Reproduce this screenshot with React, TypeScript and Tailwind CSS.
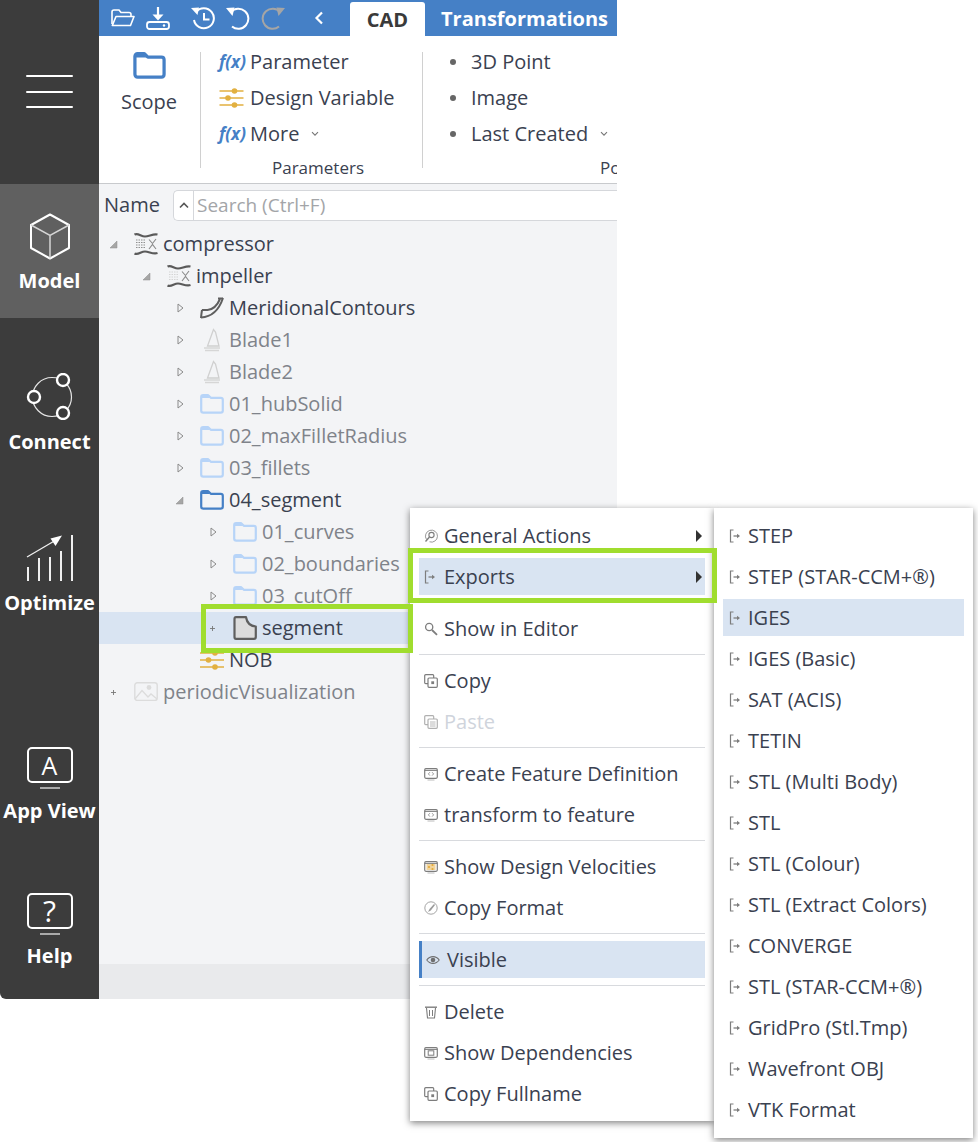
import React from "react";

const FONT = "font-['Open_Sans',_'Liberation_Sans',_sans-serif]";

function FolderIcon({ color, w = 24, h = 20, sw = 2.2 }: { color: string; w?: number; h?: number; sw?: number }) {
  return (
    <svg width={w} height={h} viewBox="0 0 24 20" fill="none" className="shrink-0">
      <path
        d="M1.2 16.5V3.2C1.2 2 2 1.2 3.2 1.2H8.2L10.8 3.8H20.8C22 3.8 22.8 4.6 22.8 5.8V16.5C22.8 17.8 22 18.6 20.8 18.6H3.2C2 18.6 1.2 17.8 1.2 16.5Z"
        stroke={color}
        strokeWidth={sw}
        strokeLinejoin="round"
      />
      <path d="M2 2H8L10 4H2Z" fill={color} />
    </svg>
  );
}

function Sliders({ w = 24, h = 20 }: { w?: number; h?: number }) {
  return (
    <svg width={w} height={h} viewBox="0 0 24 20" className="shrink-0">
      <g stroke="#e2b040" strokeWidth="1.5">
        <path d="M0 3H24M0 10H24M0 17H24" />
      </g>
      <g fill="#e2b040">
        <circle cx="15" cy="3" r="2.8" />
        <circle cx="8.5" cy="10" r="2.8" />
        <circle cx="15" cy="17" r="2.8" />
      </g>
    </svg>
  );
}

function Compressor({ dark }: { dark?: boolean }) {
  const dots = dark ? "#8f8f8f" : "#d4d4d4";
  return (
    <svg width="24" height="24" viewBox="0 0 24 24" fill="none" className="shrink-0">
      <path d="M0.5 2.5C4 0.5 7 4.5 11 4.5S19 1.5 23.5 2.5" stroke="#5a5a5a" strokeWidth="2.2" />
      <path d="M0.5 21.5C4 23.5 7 19.5 11 19.5S19 22.5 23.5 21" stroke="#5a5a5a" strokeWidth="2.2" />
      <g stroke={dots} strokeWidth="1.1" strokeDasharray="1.5 1">
        <path d="M2 8H12M2 10.5H11M2 13H11M2 15.5H12" />
      </g>
      <path d="M15 7.5L18.5 11.5L22 7M15 17L18.5 12.5L22 17" stroke="#8a8a8a" strokeWidth="1.1" />
    </svg>
  );
}

function Meridional() {
  return (
    <svg width="24" height="22" viewBox="0 0 24 22" fill="none" className="shrink-0">
      <path d="M2 13H7.5C13 12.5 17 9 20 2" stroke="#5f5f5f" strokeWidth="2" />
      <path d="M2 13C1.5 16 1.3 18 1 21" stroke="#5f5f5f" strokeWidth="2" />
      <path d="M1 20.5C11 20 19 13 23 1" stroke="#5f5f5f" strokeWidth="2" />
      <path d="M18 1.5H23" stroke="#5f5f5f" strokeWidth="2" />
    </svg>
  );
}

function Blade() {
  return (
    <svg width="24" height="24" viewBox="0 0 24 24" fill="none" className="shrink-0">
      <path d="M13.5 1.5L7.5 18H19L15.5 4Z" stroke="#d0d0d0" strokeWidth="1.3" />
      <path d="M4 20H20M5 22.5H19" stroke="#d6d6d6" strokeWidth="1.4" />
    </svg>
  );
}

function SegmentIcon() {
  return (
    <svg width="24" height="24" viewBox="0 0 24 24" className="shrink-0">
      <path
        d="M1.5 3C1.5 2 2 1.2 3 1.2H13C14 7 17 10 22.8 10.5V21C22.8 22 22 22.8 21 22.8H3C2 22.8 1.5 22 1.5 21Z"
        fill="#dcdcdc"
        stroke="#5f5f5f"
        strokeWidth="2.2"
        strokeLinejoin="round"
      />
    </svg>
  );
}

function PictureIcon() {
  return (
    <svg width="24" height="20" viewBox="0 0 24 20" fill="none" className="shrink-0">
      <rect x="0.8" y="0.8" width="22.4" height="17.6" rx="2.5" stroke="#dcdcdc" strokeWidth="1.4" />
      <circle cx="15" cy="5.5" r="2.4" fill="#dcdcdc" />
      <path d="M1 17L8 8.5L14 15L17 12L23 17" stroke="#dcdcdc" strokeWidth="1.3" />
    </svg>
  );
}

type Marker = "open" | "closed" | "plus";

function Arrow({ kind }: { kind: Marker }) {
  if (kind === "open")
    return (
      <svg width="9" height="9" viewBox="0 0 9 9" className="shrink-0">
        <path d="M8 1V8H1Z" fill="#a6a6a6" stroke="#8c8c8c" strokeWidth="0.5" />
      </svg>
    );
  if (kind === "closed")
    return (
      <svg width="9" height="10" viewBox="0 0 9 10" fill="none" className="shrink-0">
        <path d="M3 1V9L8 5Z" stroke="#8a8a8a" strokeWidth="1" />
      </svg>
    );
  return (
    <svg width="9" height="9" viewBox="0 0 9 9" className="shrink-0">
      <path d="M2 4.5H7M4.5 2V7" stroke="#777" strokeWidth="0.9" />
    </svg>
  );
}

type TreeItem = {
  label: string;
  level: number;
  marker?: Marker;
  icon: React.ReactNode;
  dim?: boolean;
  selected?: boolean;
};

const LIGHT = "#b7d4f8";
const tree: TreeItem[] = [
  { label: "compressor", level: 0, marker: "open", icon: <Compressor dark /> },
  { label: "impeller", level: 1, marker: "open", icon: <Compressor /> },
  { label: "MeridionalContours", level: 2, marker: "closed", icon: <Meridional /> },
  { label: "Blade1", level: 2, marker: "closed", icon: <Blade />, dim: true },
  { label: "Blade2", level: 2, marker: "closed", icon: <Blade />, dim: true },
  { label: "01_hubSolid", level: 2, marker: "closed", icon: <FolderIcon color={LIGHT} />, dim: true },
  { label: "02_maxFilletRadius", level: 2, marker: "closed", icon: <FolderIcon color={LIGHT} />, dim: true },
  { label: "03_fillets", level: 2, marker: "closed", icon: <FolderIcon color={LIGHT} />, dim: true },
  { label: "04_segment", level: 2, marker: "open", icon: <FolderIcon color="#4580c6" /> },
  { label: "01_curves", level: 3, marker: "closed", icon: <FolderIcon color={LIGHT} />, dim: true },
  { label: "02_boundaries", level: 3, marker: "closed", icon: <FolderIcon color={LIGHT} />, dim: true },
  { label: "03_cutOff", level: 3, marker: "closed", icon: <FolderIcon color={LIGHT} />, dim: true },
  { label: "segment", level: 3, marker: "plus", icon: <SegmentIcon />, selected: true },
  { label: "NOB", level: 2, icon: <Sliders /> },
  { label: "periodicVisualization", level: 0, marker: "plus", icon: <PictureIcon />, dim: true },
];

const pad: Record<number, string> = {
  0: "pl-[10px]",
  1: "pl-[43px]",
  2: "pl-[76px]",
  3: "pl-[109px]",
};

function TreeRow({ item }: { item: TreeItem }) {
  return (
    <div className={`flex h-8 items-center ${pad[item.level]} ${item.selected ? "bg-[#d9e4f2]" : ""}`}>
      <span className="flex w-[25px] shrink-0 items-center">{item.marker && <Arrow kind={item.marker} />}</span>
      <span className="flex w-[29px] shrink-0 items-center">{item.icon}</span>
      <span className={`text-[20px] leading-8 whitespace-nowrap ${item.dim ? "text-[#7f838a]" : "text-[#3a4150]"}`}>
        {item.label}
      </span>
    </div>
  );
}

function ExportIcon() {
  return (
    <svg width="12" height="14" viewBox="0 0 12 14" fill="none" className="shrink-0">
      <path d="M4.5 1H1.5V13H4.5" stroke="#7d7d7d" strokeWidth="1.2" />
      <path d="M4.5 7H9" stroke="#7d7d7d" strokeWidth="1.3" />
      <path d="M8 4.8L11 7L8 9.2Z" fill="#7d7d7d" />
    </svg>
  );
}

function CopyIcon({ paste }: { paste?: boolean }) {
  return (
    <svg width="14" height="14" viewBox="0 0 14 14" fill="none" className="shrink-0">
      <rect x="0.7" y="0.7" width="9" height="9" rx="1" stroke="#7d7d7d" strokeWidth="1.2" />
      <rect x="4" y="4" width="9.3" height="9.3" rx="1" fill="#fff" stroke="#7d7d7d" strokeWidth="1.2" />
      {paste ? (
        <path d="M6 7H11.5M6 9H11.5M6 11H11.5" stroke="#7d7d7d" strokeWidth="0.9" />
      ) : (
        <rect x="7.3" y="7.3" width="2.8" height="2.8" fill="#7d7d7d" />
      )}
    </svg>
  );
}

function ScreenIcon({ kind }: { kind: "code" | "sliders" | "square" }) {
  return (
    <svg width="14" height="14" viewBox="0 0 14 14" fill="none" className="shrink-0">
      <rect x="0.7" y="1.7" width="12.6" height="9.6" rx="1.2" stroke="#7d7d7d" strokeWidth="1.2" />
      <path d="M0.7 3.4H13.3" stroke="#7d7d7d" strokeWidth="1" />
      <path d="M3.5 13H10.5" stroke="#bbb" strokeWidth="1" />
      {kind === "code" && <path d="M5.9 5.2L4.4 6.9L5.9 8.6M8.1 5.2L9.6 6.9L8.1 8.6" stroke="#7d7d7d" strokeWidth="0.8" />}
      {kind === "sliders" && (
        <g>
          <path d="M2.5 5H11.5M2.5 7H11.5M2.5 9H11.5" stroke="#e2a93a" strokeWidth="1" />
          <circle cx="8.5" cy="5" r="1.1" fill="#e2a93a" />
          <circle cx="5" cy="7" r="1.1" fill="#e2a93a" />
          <circle cx="8.5" cy="9" r="1.1" fill="#e2a93a" />
        </g>
      )}
      {kind === "square" && <rect x="4.2" y="4.8" width="5.6" height="4.4" stroke="#7d7d7d" strokeWidth="1" />}
    </svg>
  );
}

function GeneralIcon() {
  return (
    <svg width="14" height="14" viewBox="0 0 14 14" fill="none" className="shrink-0">
      <path d="M2.5 10.5A6 6 0 1 1 5.5 12.8" stroke="#8c8c8c" strokeWidth="0.9" />
      <circle cx="7.5" cy="6" r="2.6" stroke="#7d7d7d" strokeWidth="1.1" />
      <path d="M5.5 8L1.5 12.5" stroke="#7d7d7d" strokeWidth="1.4" />
    </svg>
  );
}

function SearchIcon() {
  return (
    <svg width="14" height="14" viewBox="0 0 14 14" fill="none" className="shrink-0">
      <circle cx="5.2" cy="5" r="3.6" stroke="#7d7d7d" strokeWidth="1.3" />
      <path d="M8 8L13 12.8" stroke="#7d7d7d" strokeWidth="1.8" />
    </svg>
  );
}

function FormatIcon() {
  return (
    <svg width="14" height="14" viewBox="0 0 14 14" fill="none" className="shrink-0">
      <circle cx="7" cy="7" r="6.2" stroke="#9a9a9a" strokeWidth="0.9" />
      <path d="M10 3L5.5 8L4 11L6.8 9.4L11 4Z" fill="#9a9a9a" />
    </svg>
  );
}

function EyeIcon() {
  return (
    <svg width="14" height="10" viewBox="0 0 14 10" fill="none" className="shrink-0">
      <path d="M0.8 5C4 0.5 10 0.5 13.2 5C10 9.5 4 9.5 0.8 5Z" stroke="#6f6f6f" strokeWidth="1.1" />
      <circle cx="7" cy="5" r="2.3" fill="#6f6f6f" />
    </svg>
  );
}

function TrashIcon() {
  return (
    <svg width="14" height="14" viewBox="0 0 14 14" fill="none" className="shrink-0">
      <path d="M1 2.2H13" stroke="#7d7d7d" strokeWidth="1.4" />
      <path d="M2.5 3L3.5 13H10.5L11.5 3" stroke="#7d7d7d" strokeWidth="1.1" />
      <path d="M5.5 5V11M8.5 5V11" stroke="#7d7d7d" strokeWidth="1" />
    </svg>
  );
}

type MenuEntry =
  | { sep: true }
  | { sep?: false; label: string; icon: React.ReactNode; sub?: boolean; hi?: boolean; dim?: boolean; check?: boolean };

const mainMenu: MenuEntry[] = [
  { label: "General Actions", icon: <GeneralIcon />, sub: true },
  { label: "Exports", icon: <ExportIcon />, sub: true, hi: true },
  { sep: true },
  { label: "Show in Editor", icon: <SearchIcon /> },
  { sep: true },
  { label: "Copy", icon: <CopyIcon /> },
  { label: "Paste", icon: <CopyIcon paste />, dim: true },
  { sep: true },
  { label: "Create Feature Definition", icon: <ScreenIcon kind="code" /> },
  { label: "transform to feature", icon: <ScreenIcon kind="code" /> },
  { sep: true },
  { label: "Show Design Velocities", icon: <ScreenIcon kind="sliders" /> },
  { label: "Copy Format", icon: <FormatIcon /> },
  { sep: true },
  { label: "Visible", icon: <EyeIcon />, hi: true, check: true },
  { sep: true },
  { label: "Delete", icon: <TrashIcon /> },
  { label: "Show Dependencies", icon: <ScreenIcon kind="square" /> },
  { label: "Copy Fullname", icon: <CopyIcon /> },
];

const exportsMenu = [
  "STEP",
  "STEP (STAR-CCM+®)",
  "IGES",
  "IGES (Basic)",
  "SAT (ACIS)",
  "TETIN",
  "STL (Multi Body)",
  "STL",
  "STL (Colour)",
  "STL (Extract Colors)",
  "CONVERGE",
  "STL (STAR-CCM+®)",
  "GridPro (Stl.Tmp)",
  "Wavefront OBJ",
  "VTK Format",
];

function MainMenu() {
  return (
    <div className="absolute left-[410px] top-[508px] z-10 flex h-[613px] w-[304px] flex-col bg-white px-[9px] pt-[9px] shadow-[0_2px_7px_rgba(0,0,0,0.5)]">
      {mainMenu.map((e, i) =>
        e.sep ? (
          <div key={i} className="mt-[3px] mb-[7px] h-px shrink-0 bg-[#d8dade]" />
        ) : (
          <div
            key={i}
            className={`mb-1 flex h-[37px] shrink-0 items-center ${e.check ? "border-l-[3px] border-[#4580c6] pl-1" : "pl-[5px]"} ${
              e.hi ? "bg-[#d9e4f2]" : ""
            }`}
          >
            <span className={`flex shrink-0 items-center ${e.check ? "w-[21px]" : "w-5"} ${e.dim ? "opacity-60" : ""}`}>
              {e.icon}
            </span>
            <span className={`flex-1 whitespace-nowrap text-[20px] ${e.dim ? "text-[#cfd4dc]" : "text-[#3a4150]"}`}>
              {e.label}
            </span>
            {e.sub && (
              <svg width="6" height="12" viewBox="0 0 6 12" className="mr-[3px] shrink-0">
                <path d="M0 0L6 6L0 12Z" fill="#333" />
              </svg>
            )}
          </div>
        ),
      )}
    </div>
  );
}

function ExportsMenu() {
  return (
    <div className="absolute left-[714px] top-[508px] z-20 flex h-[630px] w-[259px] flex-col bg-white px-[9px] pt-[9px] shadow-[0_2px_7px_rgba(0,0,0,0.5)]">
      {exportsMenu.map((label) => (
        <div
          key={label}
          className={`mb-1 flex h-[37px] shrink-0 items-center pl-[6px] ${label === "IGES" ? "bg-[#d9e4f2]" : ""}`}
        >
          <span className="flex w-[19px] shrink-0 items-center">
            <ExportIcon />
          </span>
          <span className="whitespace-nowrap text-[20px] text-[#3a4150]">{label}</span>
        </div>
      ))}
    </div>
  );
}

function SideItem({
  label,
  icon,
  box,
  iconBox = "h-[47px]",
  labelBox = "mt-[6px]",
  active,
}: {
  label: string;
  icon: React.ReactNode;
  box: string;
  iconBox?: string;
  labelBox?: string;
  active?: boolean;
}) {
  return (
    <div className={`flex flex-col items-center ${box} ${active ? "bg-[#606060]" : ""}`}>
      <div className={`flex flex-col items-center ${iconBox}`}>{icon}</div>
      <span className={`text-[20px] leading-[30px] font-bold whitespace-nowrap text-white ${labelBox}`}>{label}</span>
    </div>
  );
}

function Screen({ glyph, size }: { glyph: string; size: string }) {
  return (
    <>
      <div className={`flex h-[36px] w-[46px] items-center justify-center rounded-[5px] border-2 border-white leading-none text-white ${size}`}>
        {glyph}
      </div>
      <div className="mt-[4px] h-[2px] w-[20px] bg-[#aaa]" />
    </>
  );
}

function Sidebar() {
  return (
    <div className="flex h-[999px] w-[99px] shrink-0 flex-col rounded-bl-[6px] bg-[#3c3c3c]">
      <div className="flex h-[184px] flex-col items-center gap-[13.5px] pt-[75px]">
        <div className="h-[2px] w-[47px] rounded bg-white" />
        <div className="h-[2px] w-[47px] rounded bg-white" />
        <div className="h-[2px] w-[47px] rounded bg-white" />
      </div>
      <SideItem
        active
        label="Model"
        box="h-[134px] pt-[29px]"
        icon={
          <svg width="44" height="47" viewBox="0 0 44 47" fill="none">
            <path d="M22 1.5L41 12V35L22 45.5L3 35V12Z" stroke="#fff" strokeWidth="2" strokeLinejoin="round" />
            <path d="M3 12L22 22.5L41 12M22 22.5V45.5" stroke="#d5d5d5" strokeWidth="1.5" />
          </svg>
        }
      />
      <SideItem
        label="Connect"
        box="h-[161px] pt-[55px]"
        labelBox="mt-[7px]"
        icon={
          <svg width="48" height="47" viewBox="0 0 48 47" fill="none">
            <circle cx="26" cy="24" r="19.5" stroke="#e5e5e5" strokeWidth="1.2" />
            <circle cx="37" cy="7" r="6" fill="#3c3c3c" stroke="#fff" strokeWidth="2.4" />
            <circle cx="8" cy="24" r="6" fill="#3c3c3c" stroke="#fff" strokeWidth="2.4" />
            <circle cx="37" cy="40" r="6" fill="#3c3c3c" stroke="#fff" strokeWidth="2.4" />
          </svg>
        }
      />
      <SideItem
        label="Optimize"
        box="h-[161px] pt-[55px]"
        labelBox="mt-[7px]"
        icon={
          <svg width="48" height="47" viewBox="0 0 48 47" fill="none">
            <path d="M1 23L30 6" stroke="#f0f0f0" strokeWidth="1.3" />
            <path d="M36 1.5L24.5 4.5L29.5 12Z" fill="#fff" />
            <path d="M2 33V47M13 24V47M24 23V47M35 17V47M46 1V47" stroke="#f0f0f0" strokeWidth="2" />
          </svg>
        }
      />
      <SideItem label="App View" box="h-[215px] pt-[107px]" iconBox="h-[43px]" icon={<Screen glyph="A" size="text-[25px]" />} />
      <SideItem
        label="Help"
        box="h-[120px] pt-[38px]"
        iconBox="h-[43px]"
        labelBox="mt-[5px]"
        icon={<Screen glyph="?" size="text-[30px]" />}
      />
    </div>
  );
}

function TopBar() {
  return (
    <div className="flex h-9 shrink-0 items-end bg-[#4580c6]">
      <div className="flex h-9 items-center pl-3">
        <svg width="24" height="18" viewBox="0 0 24 18" fill="none" className="mr-[11px]">
          <path d="M1 15V3C1 2 2 1 3 1H8L10 3.5H18C19 3.5 20 4.3 20 5.5V7" stroke="#fff" strokeWidth="1.6" />
          <path d="M1.3 16.5L5 7.5H23L19.5 16.5Z" stroke="#fff" strokeWidth="1.6" strokeLinejoin="round" />
        </svg>
        <svg width="24" height="23" viewBox="0 0 24 23" fill="none" className="mr-[21px]">
          <path d="M12 0V10" stroke="#fff" strokeWidth="2.2" />
          <path d="M6.5 7.5H17.5L12 13.5Z" fill="#fff" />
          <rect x="1" y="15" width="22" height="7" rx="2.5" stroke="#fff" strokeWidth="1.8" />
          <circle cx="18" cy="18.5" r="1.2" fill="#fff" />
        </svg>
        <svg width="24" height="24" viewBox="0 0 24 24" fill="none" className="mr-[11px]">
          <path d="M5 6A10 10 0 1 1 3 14" stroke="#fff" strokeWidth="2" />
          <path d="M0 2L8 1.5L6.5 9Z" fill="#fff" />
          <path d="M13 7V13.5H18.5" stroke="#fff" strokeWidth="2" />
        </svg>
        <svg width="24" height="24" viewBox="0 0 24 24" fill="none" className="mr-[11px]">
          <path d="M5 6A10 10 0 1 1 6 20.5" stroke="#fff" strokeWidth="2" />
          <path d="M0 2L8.5 1.5L6.5 10Z" fill="#fff" />
        </svg>
        <svg width="24" height="24" viewBox="0 0 24 24" fill="none" className="mr-[29px]">
          <path d="M19 6A10 10 0 1 0 18 20.5" stroke="#a5a5a5" strokeWidth="2" />
          <path d="M24 2L15.5 1.5L17.5 10Z" fill="#a5a5a5" />
        </svg>
        <svg width="10" height="14" viewBox="0 0 10 14" fill="none" className="mr-[26px]">
          <path d="M8 1.5L2.5 7L8 12.5" stroke="#fff" strokeWidth="2.2" />
        </svg>
      </div>
      <div className="flex h-[34px] w-[75px] items-center justify-center rounded-t-[3px] bg-white pt-[1px] text-[20px] font-bold text-[#3a3a3a]">
        CAD
      </div>
      <div className="flex h-9 items-center pl-4 pt-[1px] text-[20px] font-bold whitespace-nowrap text-white">
        Transformations
      </div>
    </div>
  );
}

function Chevron() {
  return (
    <svg width="8" height="6" viewBox="0 0 8 6" fill="none">
      <path d="M1 1.2L4 4.2L7 1.2" stroke="#777" strokeWidth="1.1" />
    </svg>
  );
}

function RibbonItem({ icon, label, tail }: { icon: React.ReactNode; label: string; tail?: React.ReactNode }) {
  return (
    <div className="flex h-9 items-center whitespace-nowrap text-[20px] text-[#3a4150]">
      {icon}
      <span>{label}</span>
      {tail}
    </div>
  );
}

function Fx() {
  return <span className="w-[31px] shrink-0 text-[17px] font-bold text-[#4580c6] italic">f(x)</span>;
}

function Bullet() {
  return (
    <span className="flex w-[48px] shrink-0 pl-[27px]">
      <span className="h-[6px] w-[6px] rounded-full bg-[#666]" />
    </span>
  );
}

function Ribbon() {
  return (
    <div className="flex h-[148px] shrink-0 border-b border-[#c8cacd] bg-white pt-4">
      <div className="flex h-[116px] w-[102px] shrink-0 flex-col items-center border-r border-[#d0d0d0] pr-px">
        <FolderIcon color="#4580c6" w={33} h={27} sw={2.4} />
        <span className="mt-[8px] text-[20px] text-[#3a4150]">Scope</span>
      </div>
      <div className="flex h-[116px] w-[222px] shrink-0 flex-col border-r border-[#d0d0d0] pl-[18px]">
        <div className="-mt-2 flex flex-col">
          <RibbonItem icon={<Fx />} label="Parameter" />
          <RibbonItem
            icon={
              <span className="w-[31px] shrink-0">
                <Sliders w={25} />
              </span>
            }
            label="Design Variable"
          />
          <RibbonItem
            icon={<Fx />}
            label="More"
            tail={
              <span className="ml-[12px]">
                <Chevron />
              </span>
            }
          />
        </div>
        <span className="mt-[6px] ml-[53px] text-[17px] leading-5 text-[#3a4150]">Parameters</span>
      </div>
      <div className="flex h-[116px] shrink-0 flex-col">
        <div className="-mt-2 flex flex-col">
          <RibbonItem icon={<Bullet />} label="3D Point" />
          <RibbonItem icon={<Bullet />} label="Image" />
          <RibbonItem
            icon={<Bullet />}
            label="Last Created"
            tail={
              <span className="ml-[12px]">
                <Chevron />
              </span>
            }
          />
        </div>
        <span className="mt-[6px] ml-[177px] text-[17px] leading-5 text-[#3a4150]">Po</span>
      </div>
    </div>
  );
}

export default function App() {
  return (
    <div className={`relative h-[1142px] w-[978px] overflow-hidden bg-white ${FONT}`}>
      <div className="flex h-[999px] w-[617px] overflow-hidden">
        <Sidebar />
        <div className="flex min-w-0 flex-1 flex-col overflow-hidden bg-[#f3f4f6]">
          <TopBar />
          <Ribbon />
          <div className="flex h-[44px] shrink-0 items-center pb-[2px] pl-[5px]">
            <span className="w-[69px] shrink-0 text-[20px] text-[#3a4150]">Name</span>
            <div className="flex h-[31px] flex-1 items-center rounded-l-[5px] border-y border-l border-[#d5d7db] bg-white">
              <span className="flex h-full w-[20px] shrink-0 items-center justify-center border-r border-[#d5d7db]">
                <svg width="10" height="7" viewBox="0 0 10 7" fill="none">
                  <path d="M1 5.5L5 1.5L9 5.5" stroke="#555" strokeWidth="1.6" />
                </svg>
              </span>
              <span className="pl-[3px] text-[19px] whitespace-nowrap text-[#a3a5a8]">Search (Ctrl+F)</span>
            </div>
          </div>
          <div className="flex-1">
            {tree.map((item) => (
              <TreeRow key={item.label} item={item} />
            ))}
          </div>
          <div className="h-[35px] shrink-0 bg-[#e9eaec]" />
        </div>
      </div>
      <MainMenu />
      <ExportsMenu />
      <div className="absolute left-[201px] top-[604px] z-30 h-[49px] w-[212px] border-[5px] border-[#a0dd2e]" />
      <div className="absolute left-[408px] top-[548px] z-30 h-[55px] w-[309px] border-[5px] border-[#a0dd2e]" />
    </div>
  );
}
